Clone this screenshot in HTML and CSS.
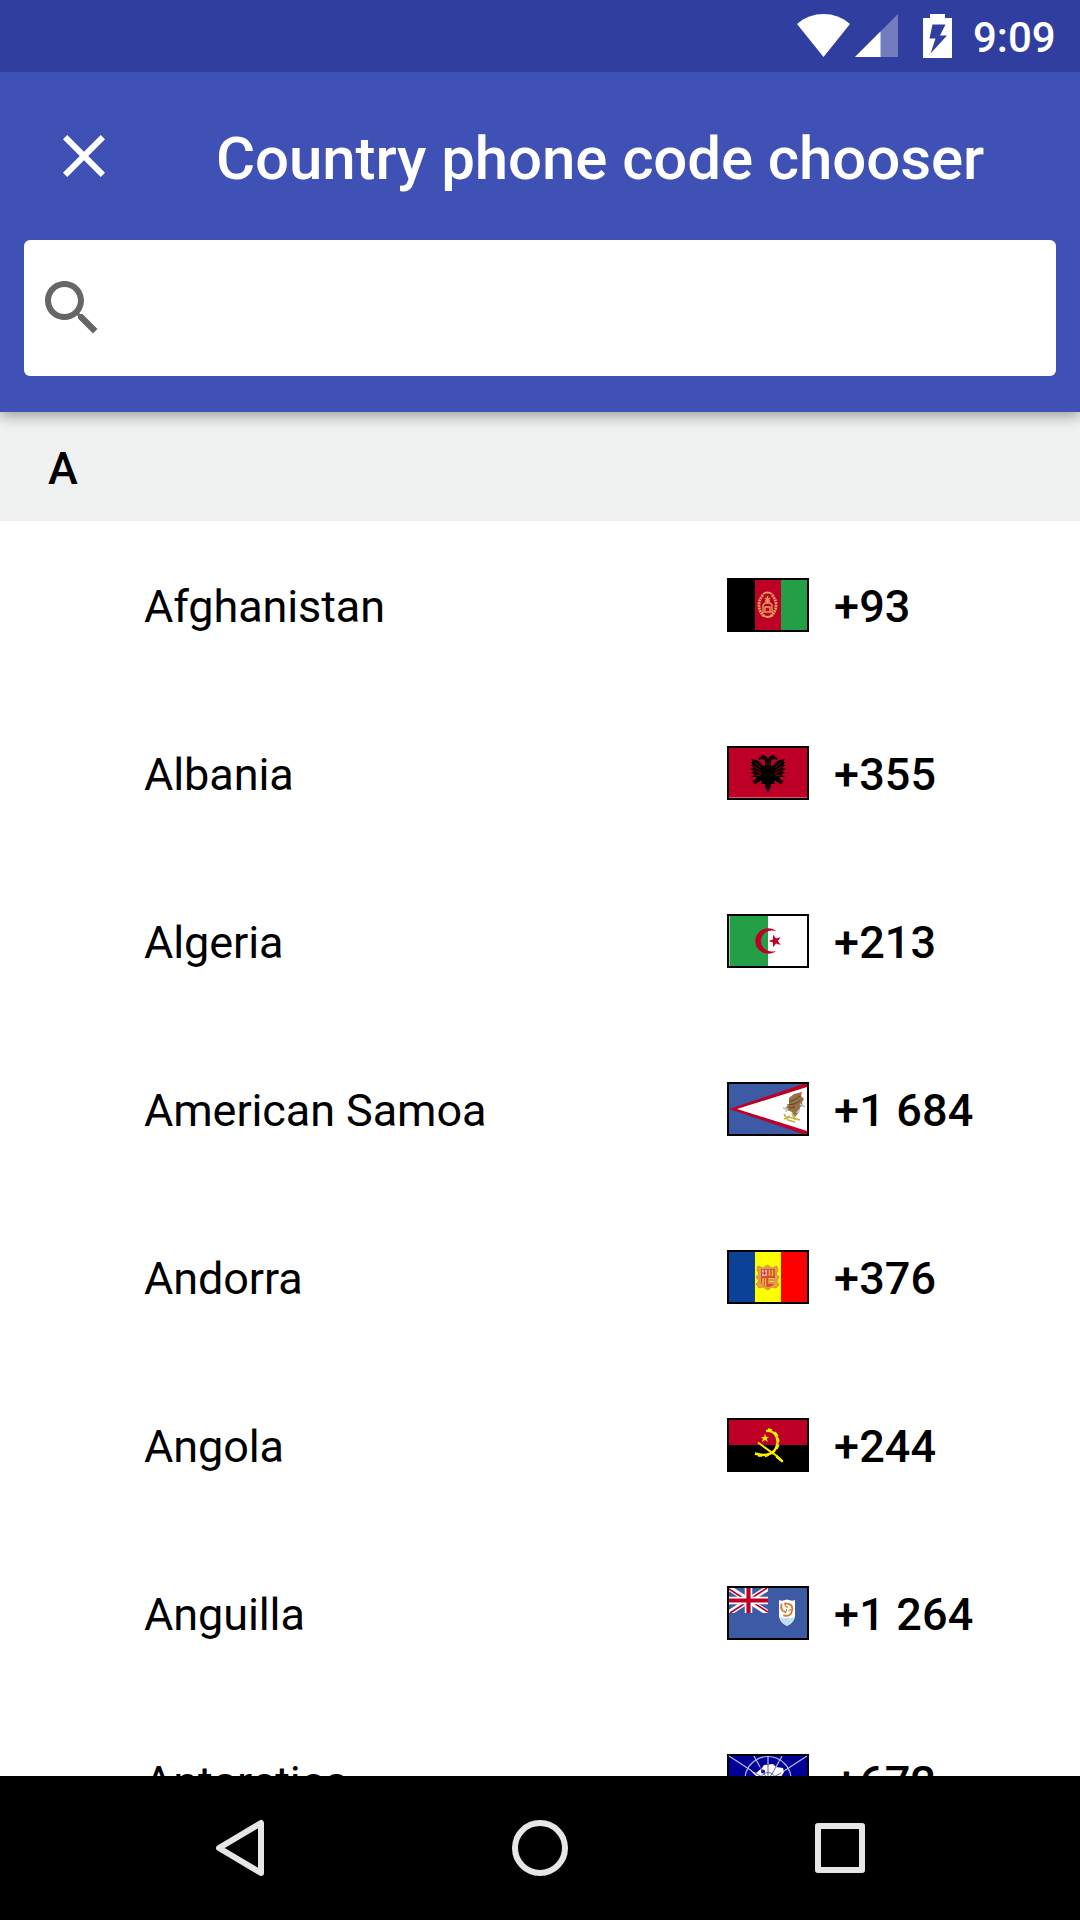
FILE: index.html
```
<!DOCTYPE html>
<html lang="en">
<head>
<meta charset="utf-8">
<title>Country phone code chooser</title>
<link rel="stylesheet" href="styles.css">
</head>
<body>
<div class="screen">
  <div class="status-bar">
    <svg class="wifi" viewBox="0 0 53 43"><path d="M0 10C15-3.300 38-3.300 53 10L26.500 43Z" fill="#fff"/></svg>
    <svg class="signal" viewBox="0 0 43 43"><path d="M43 0V43H0Z" fill="#fff" fill-opacity=".32"/><path d="M25.500 17.500V43H0Z" fill="#fff"/></svg>
    <svg class="battery" viewBox="0 0 29 44"><path fill="#fff" fill-rule="evenodd" d="M7 0H22V4H29V44H0V4H7ZM9.500 10.500L6.500 24.500H12.500L7.500 39.500L24 21.500H17L22.500 10.500Z"/></svg>
    <span class="clock">9:09</span>
  </div>

  <header class="app-bar">
    <div class="toolbar">
      <svg class="close" viewBox="0 0 24 24"><path fill="#fff" d="M19 6.410L17.590 5 12 10.590 6.410 5 5 6.410 10.590 12 5 17.590 6.410 19 12 13.410 17.590 19 19 17.590 13.410 12z"/></svg>
      <h1 class="title">Country phone code chooser</h1>
    </div>
    <div class="search">
      <svg class="search-icon" viewBox="0 0 24 24"><path fill="#666" d="M15.500 14h-.790l-.280-.270C15.410 12.590 16 11.110 16 9.500 16 5.910 13.090 3 9.500 3S3 5.910 3 9.500 5.910 16 9.500 16c1.610 0 3.090-.590 4.230-1.570l.270.280v.790l5 4.990L20.490 19l-4.990-5zm-6 0C7.010 14 5 11.990 5 9.500S7.010 5 9.500 5 14 7.010 14 9.500 11.990 14 9.500 14z"/></svg>
    </div>
  </header>

  <main class="list">
    <h2 class="section">A</h2>

    <div class="row">
      <span class="name">Afghanistan</span>
      <svg class="flag" viewBox="0 0 82 54">
        <rect width="82" height="54"/><rect x="28" y="2" width="26" height="50" fill="#be0027"/><rect x="54" y="2" width="26" height="50" fill="#249f48"/>
        <g fill="none" stroke="#dfa05a">
          <path d="M36 17C30 23 31 33 37 38M45 17C51 23 50 33 44 38" stroke-width="2.800" stroke-dasharray="2 .700"/>
          <path d="M36 16Q40.500 13 45 16M35 37Q40.500 41 46 37" stroke-width="1.800"/>
          <path d="M36 33V27L38 25H43L45 27V33M38 33V29H43V33M35 34H46M38 23H43M40.500 18V25M38 20L40.500 22 43 20" stroke-width="1.400"/>
        </g>
      </svg>
      <span class="code">+93</span>
    </div>

    <div class="row">
      <span class="name">Albania</span>
      <svg class="flag" viewBox="0 0 82 54">
        <rect width="82" height="54"/><rect x="2" y="2" width="78" height="50" fill="#be0027"/><path d="M2 51.500H80" stroke="#d0606f"/>
        <path d="M41 17L38 19V15L36 13 31 14 33 11 36 9 40 11 41 14 42 11 46 9 49 11 51 14 46 13 44 15V19ZM36 20L33 16 29 14 24 13 26 16H23L26 19H23L27 22 23 23 27 25 24 27 28 28 24 31 30 31 28 34 25 35 28 38 32 36 35 34 34 38 38 38 39 43 41 46 43 43 44 38 48 38 47 34 50 36 54 38 57 35 54 34 52 31 58 31 54 28 58 27 55 25 59 23 55 22 59 19H56L59 16H56L58 13 53 14 49 16 46 20 41 18Z"/>
        <path d="M27 16L34 22M26 20L34 25M27 24L35 28M28 29L34 30M55 16L48 22M56 20L48 25M55 24L47 28M54 29L48 30" stroke="#98001f" stroke-width=".800"/>
      </svg>
      <span class="code">+355</span>
    </div>

    <div class="row">
      <span class="name">Algeria</span>
      <svg class="flag" viewBox="0 0 82 54">
        <rect width="82" height="54"/><rect x="2" y="2" width="78" height="50" fill="#fff"/><rect x="2.500" y="2" width="38.500" height="50" fill="#249f48"/>
        <path d="M49.500 17.600A12.700 12.700 0 1 0 49.500 36.400A10.600 10.600 0 1 1 49.500 17.600ZM41.500 27L46 25.500 46 20.800 49 24.600 53.700 23 50.900 27 53.700 31 49 29.400 46 33.200 46 28.500Z" fill="#be0027"/>
      </svg>
      <span class="code">+213</span>
    </div>

    <div class="row">
      <span class="name">American Samoa</span>
      <svg class="flag" viewBox="0 0 82 54">
        <rect width="82" height="54"/><rect x="2" y="2" width="78" height="50" fill="#3d5aa4"/>
        <path d="M2.500 27L76 2H80V52H76Z" fill="#be0027"/><path d="M10 27L80 5V49Z" fill="#fff"/>
        <path d="M62 16L67 12 75 10 74 14 77 17 75 20 76 24 73 25 72 30 68 35 65 30 60 28 59 25 62 23Z" fill="#987045"/>
        <path d="M62 20L69 17 73 14M60 23L67 22 73 19M62 26L68 25" fill="none" stroke="#5d462c"/>
        <path d="M56 26L60 27 59 30M73 22L78 25M70 31L72 28" fill="none" stroke="#c4c4c4" stroke-width="2"/>
        <path d="M57 32L61 38 68 40M61 35L73 38M65 31L68 38M57 37L63 34" fill="none" stroke="#c5b13f" stroke-width="1.600"/>
      </svg>
      <span class="code">+1 684</span>
    </div>

    <div class="row">
      <span class="name">Andorra</span>
      <svg class="flag" viewBox="0 0 82 54">
        <rect width="82" height="54"/><rect x="2" y="2" width="26" height="50" fill="#0b4298"/><rect x="28" y="2" width="26" height="50" fill="#ff0"/><rect x="54" y="2" width="26" height="50" fill="#f00"/>
        <path d="M31 16L36 18 40.500 15 45 18 50 16 51 21 49 24 52 27 50 31 52 35 49 38 45 37 41 40 36 37 32 38 29 34 32 31 29 27 32 24 30 20Z" fill="#e2a04c" stroke="#c87c3d" stroke-width=".700"/>
        <path d="M34 19H48V33Q46 36 41 37Q35 36 34 33Z" fill="#d94b32"/>
        <rect x="35" y="20" width="5" height="6" fill="#e9b5a5"/><path d="M37.500 20V25M35 23H39" stroke="#d52b3e"/>
        <path d="M42.500 20V26M45.500 20V26M36 28V35M38.500 28V36" stroke="#ffc747" stroke-width="1.300"/><rect x="41.500" y="28" width="6" height="6" fill="#f4d557"/><path d="M42 30H47M42 33H47" stroke="#cb4631"/>
      </svg>
      <span class="code">+376</span>
    </div>

    <div class="row">
      <span class="name">Angola</span>
      <svg class="flag" viewBox="0 0 82 54">
        <rect width="82" height="54"/><rect x="2" y="2" width="78" height="25" fill="#be0027"/>
        <path d="M39 13C48 12 52 20 50 27C48 36 39 39 28 35.500" fill="none" stroke="#fff000" stroke-width="2.400"/>
        <path d="M41 11L45 12M48 14L51 18M51 20L52 24M52 27L50 31M48 33L45 36M42 37L38 39M35 38L31 38" fill="none" stroke="#fff000" stroke-width="1.300"/>
        <path d="M31 24.500C37 29 44 34 50 38L55 43" fill="none" stroke="#fff000" stroke-width="1.900"/><path d="M50 39L55 43" stroke="#fff000" stroke-width="2.600" stroke-linecap="round"/>
        <path d="M38 15.500L39 19H42L39.600 20.800L41 24L38 22L35 24L36 21L34 19H37Z" fill="#fff000"/>
      </svg>
      <span class="code">+244</span>
    </div>

    <div class="row">
      <span class="name">Anguilla</span>
      <svg class="flag" viewBox="0 0 82 54">
        <rect width="82" height="54"/><rect x="2" y="2" width="78" height="50" fill="#3d5aa4"/>
        <svg x="2" y="2" width="39" height="25" viewBox="0 0 39 25">
          <path d="M0 0L39 25M39 0L0 25" stroke="#fff" stroke-width="5.500"/>
          <path d="M0 1L19.500 13.500M39 24L19.500 11.500M38 0L19.500 12M1 25L19.500 13" stroke="#be0027" stroke-width="1.700"/>
          <path d="M19.500 0V25M0 12.500H39" stroke="#fff" stroke-width="7.500"/><path d="M19.500 0V25M0 12.500H39" stroke="#be0027" stroke-width="4.200"/>
        </svg>
        <path d="M52 14Q55 15.500 60 13.500Q65 15.500 68 14V30Q67 37 60 40Q53 37 52 30Z" fill="#fff"/><path d="M52 31Q56 33 60 31.500Q64 33 68 31Q66 37 60 39.500Q54 37 52 31Z" fill="#bddff2"/>
        <path d="M58 17.500Q65 17 65.500 23M54.500 18.500Q53 25 58.500 26M57 29.500Q64 31 65 24.500" fill="none" stroke="#d68139" stroke-width="2" stroke-linecap="round"/><path d="M58 18Q58 21 61 21.500M58.500 26Q60 25 59.500 23M65 24Q63 23 61.500 25" fill="none" stroke="#d68139" stroke-width="1.200"/>
      </svg>
      <span class="code">+1 264</span>
    </div>

    <div class="row">
      <span class="name">Antarctica</span>
      <svg class="flag" viewBox="0 0 82 54">
        <rect width="82" height="54"/><rect x="2" y="2" width="78" height="50" fill="#000099"/>
        <path d="M23 16L29 19 35 14 37 11 46 10 49 13 56 14 57 18 54 23 56 30 49 38 38 39 31 31 29 22Z" fill="#fff"/>
        <circle cx="36" cy="17.500" r="2" fill="#000099"/>
        <g fill="none" stroke="#b9b9df" stroke-width="1.200"><circle cx="41" cy="25.500" r="23"/><path d="M2 2L25 17M80 2L57 17M27 2L33 13M55 2L49 13M41 2V10"/></g>
        <g fill="none" stroke="#5555aa" stroke-width=".900"><circle cx="41" cy="26" r="7.500"/><path d="M41 10V26M33 13L41 26 49 13M28 19L41 26 54 19"/></g>
      </svg>
      <span class="code">+672</span>
    </div>
  </main>

  <nav class="nav-bar">
    <svg class="nav-icon" viewBox="0 0 60 60"><path d="M9 30L51 5V55Z"/></svg>
    <svg class="nav-icon" viewBox="0 0 60 60"><circle cx="30" cy="30" r="25"/></svg>
    <svg class="nav-icon" viewBox="0 0 60 60"><rect x="8" y="8" width="44" height="44"/></svg>
  </nav>
</div>
</body>
</html>
```
FILE: styles.css
```
* {
  box-sizing: border-box;
}

body {
  margin: 0;
  background: #fff;
  color: #000;
  font-family: Roboto, "Liberation Sans", sans-serif;
}

svg {
  display: block;
  flex: none;
}

.screen {
  width: 1080px;
  height: 1920px;
  display: flex;
  flex-direction: column;
  overflow: hidden;
}

.status-bar {
  height: 72px;
  flex: none;
  z-index: 2;
  display: flex;
  align-items: flex-start;
  justify-content: flex-end;
  padding: 14px 24px 0 0;
  background: #303f9f;
}

.wifi {
  width: 53px;
  height: 43px;
}

.signal {
  width: 43px;
  height: 43px;
  margin-left: 5px;
}

.battery {
  width: 29px;
  height: 44px;
  margin-left: 25px;
}

.clock {
  width: 83px;
  margin-left: 21px;
  color: #fff;
  font-size: 42px;
  font-weight: 500;
  line-height: 48px;
}

.app-bar {
  height: 340px;
  flex: none;
  z-index: 1;
  padding: 0 24px;
  background: #3f51b5;
  box-shadow: 0 5px 12px rgba(0, 0, 0, .31);
}

.toolbar {
  height: 168px;
  display: flex;
  align-items: flex-start;
  padding: 48px 0 0 24px;
}

.close,
.search-icon {
  width: 72px;
  height: 72px;
}

.title {
  margin: 4px 0 0 96px;
  color: #fff;
  font-size: 60px;
  font-weight: 500;
  line-height: 70px;
  letter-spacing: -.1px;
  white-space: nowrap;
}

.search {
  height: 136px;
  display: flex;
  align-items: center;
  padding-left: 12px;
  border-radius: 6px;
  background: #fff;
}

.list {
  flex: 1;
  min-height: 0;
  overflow: hidden;
}

.section {
  height: 109px;
  margin: 0;
  padding: 4px 0 0 48px;
  background: #eff1f0;
  font-size: 45px;
  font-weight: 500;
  line-height: 106px;
}

.row {
  height: 168px;
  display: flex;
  align-items: center;
  padding-left: 144px;
  font-size: 45px;
  line-height: 54px;
}

.name {
  width: 583px;
  padding-top: 4px;
  letter-spacing: -.1px;
}

.flag {
  width: 82px;
  height: 54px;
}

.code {
  margin-left: 25px;
  padding-top: 4px;
  font-weight: 500;
  letter-spacing: .15px;
}

.nav-bar {
  height: 144px;
  flex: none;
  display: flex;
  align-items: center;
  justify-content: center;
  gap: 240px;
  background: #000;
}

.nav-icon {
  width: 60px;
  height: 60px;
  fill: none;
  stroke: #e6e6e6;
  stroke-width: 6px;
  stroke-linejoin: round;
}
```
